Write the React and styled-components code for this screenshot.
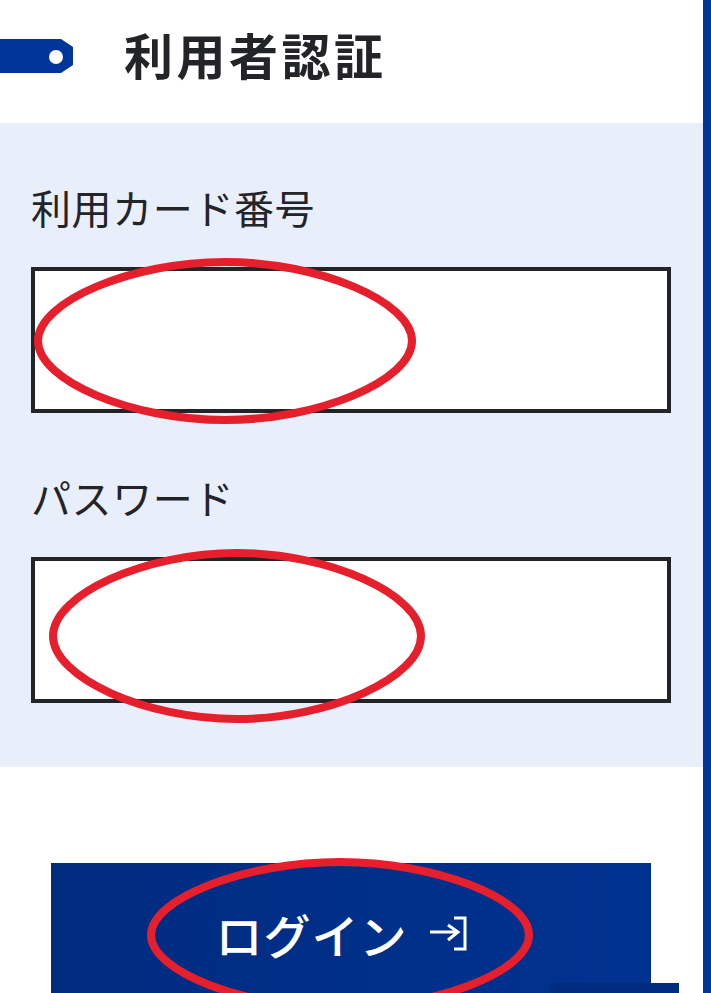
import React from "react";
import styled, { createGlobalStyle } from "styled-components";

const GlobalStyle = createGlobalStyle`
  html, body {
    margin: 0;
    padding: 0;
    background: #fff;
  }
  * {
    box-sizing: border-box;
  }
`;

const Page = styled.div`
  position: relative;
  display: flex;
  width: 711px;
  height: 993px;
  overflow: hidden;
  font-family: "Noto Sans CJK JP", "Noto Sans", sans-serif;
  color: #222427;
`;

const Main = styled.main`
  flex: 1;
  min-width: 0;
`;

const SideBar = styled.div`
  width: 8px;
  background: #00359a;
`;

const Header = styled.header`
  display: flex;
  align-items: center;
  gap: 51px;
  height: 123px;
  padding-bottom: 11px;
`;

const Tag = styled.div`
  position: relative;
  width: 73px;
  height: 34px;
  background: #00359a;
  clip-path: polygon(0 0, 61px 0, 100% 8px, 100% 26px, 61px 100%, 0 100%);

  &::after {
    content: "";
    position: absolute;
    left: 49px;
    top: 11px;
    width: 14px;
    height: 14px;
    border-radius: 50%;
    background: #fff;
  }
`;

const Title = styled.h1`
  margin: 0 0 6px;
  font-size: 49px;
  font-weight: 700;
  line-height: 1;
  letter-spacing: 3.5px;
`;

const Panel = styled.section`
  padding: 64px 32px 64px 31px;
  background: #e8eefa;
`;

const Label = styled.label`
  display: block;
  margin-bottom: 40px;
  font-size: 40px;
  font-weight: 400;
  line-height: 40px;
  letter-spacing: 0.6px;
`;

const Input = styled.input`
  display: block;
  width: 100%;
  height: 146px;
  margin-bottom: 64px;
  border: 4px solid #222427;
  border-radius: 0;
  background: #fff;
  outline: none;

  &:last-child {
    margin-bottom: 0;
  }
`;

const LoginButton = styled.button`
  display: flex;
  align-items: center;
  justify-content: center;
  gap: 21px;
  width: 600px;
  height: 140px;
  margin: 96px 0 0 51px;
  padding: 0 20px 0 0;
  border: 0;
  border-radius: 0;
  background: linear-gradient(90deg, #002c80, #003290);
  color: #fff;
  font-family: inherit;
  font-size: 47px;
  font-weight: 500;
  line-height: 1;
  letter-spacing: 1px;
`;

const FloatingTab = styled.div`
  position: absolute;
  left: 551px;
  top: 983px;
  width: 128px;
  height: 10px;
  background: #002c80;
`;

const Marks = styled.svg`
  position: absolute;
  inset: 0;
  pointer-events: none;
`;

const LoginIcon = () => (
  <svg width="38" height="36" viewBox="0 0 38 36" fill="none" stroke="#fff" strokeWidth="3">
    <path d="M1 17H29M19 10L29 17L19 25" />
    <path d="M25 3H36V34H25" />
  </svg>
);

// hand drawn ring, a little flatter at the sides than a true ellipse
const ring = (cx, cy, rx, ry) => {
  const kx = rx * 0.5;
  const ky = ry * 0.5;
  return `M${cx - rx} ${cy}
    C${cx - rx} ${cy - ky} ${cx - kx} ${cy - ry} ${cx} ${cy - ry}
    C${cx + kx} ${cy - ry} ${cx + rx} ${cy - ky} ${cx + rx} ${cy}
    C${cx + rx} ${cy + ky} ${cx + kx} ${cy + ry} ${cx} ${cy + ry}
    C${cx - kx} ${cy + ry} ${cx - rx} ${cy + ky} ${cx - rx} ${cy}Z`;
};

const App = () => {
  return (
    <>
      <GlobalStyle />
      <Page>
        <Main>
          <Header>
            <Tag />
            <Title>利用者認証</Title>
          </Header>
          <Panel>
            <Label htmlFor="card">利用カード番号</Label>
            <Input id="card" type="text" />
            <Label htmlFor="password">パスワード</Label>
            <Input id="password" type="password" />
          </Panel>
          <LoginButton type="button">
            ログイン
            <LoginIcon />
          </LoginButton>
        </Main>
        <SideBar />
        <FloatingTab />
        <Marks width="711" height="993" viewBox="0 0 711 993" fill="none" stroke="#e61f2d" strokeWidth="8">
          <path d={ring(225, 341, 187, 79)} />
          <path d={ring(237, 636, 184, 83)} />
          <path d={ring(340, 935, 189, 73)} />
        </Marks>
      </Page>
    </>
  );
};

export default App;
